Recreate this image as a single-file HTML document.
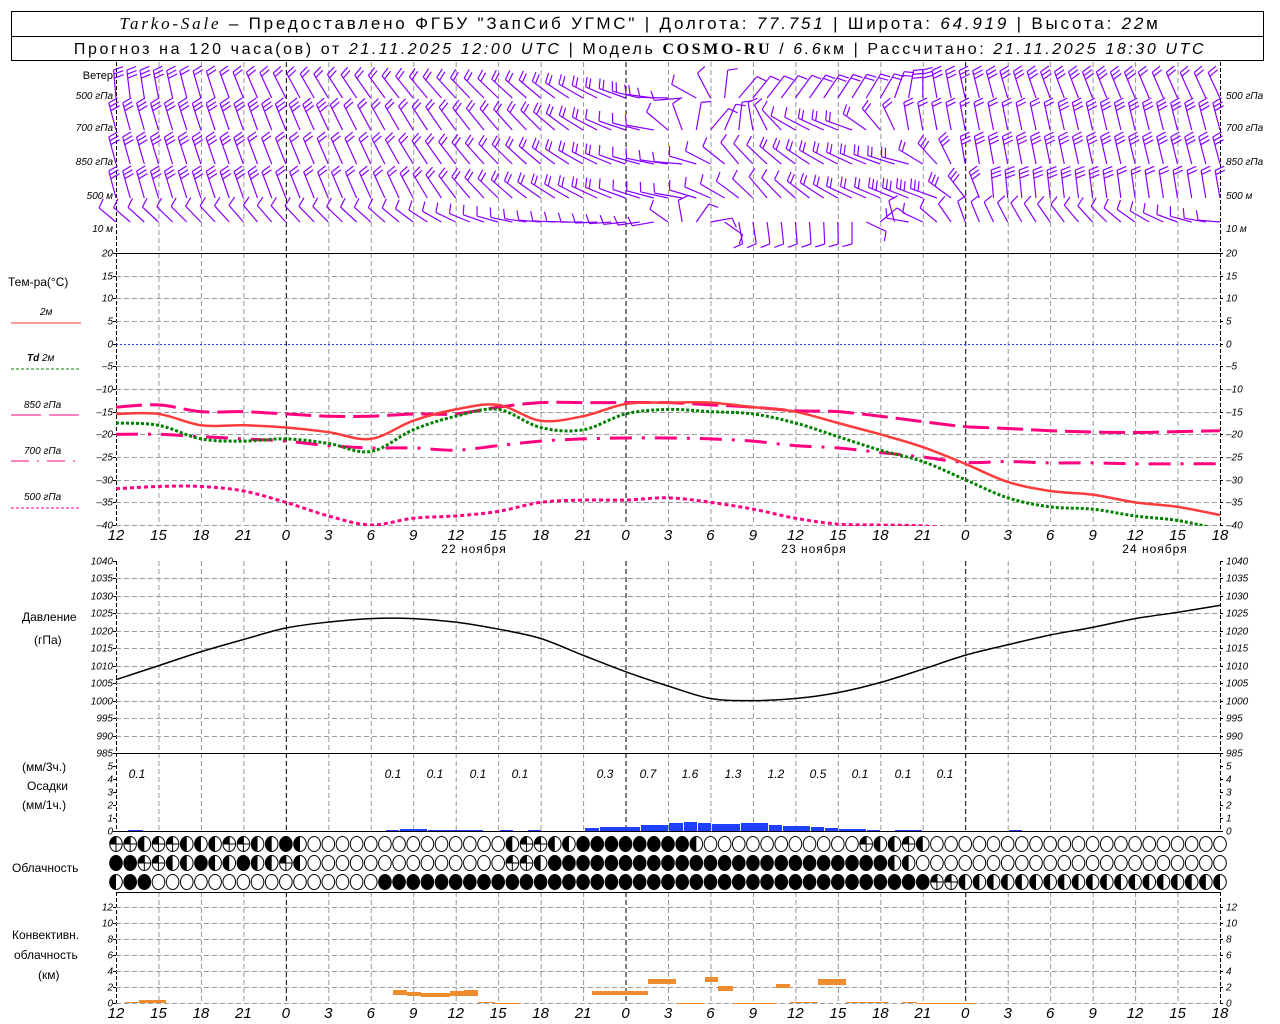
<!DOCTYPE html>
<html><head><meta charset="utf-8"><style>
html,body{margin:0;padding:0;background:#fff;width:1280px;height:1024px;overflow:hidden}
svg{display:block}
text{font-family:"Liberation Sans",sans-serif;fill:#000}
.t{font-size:10px;font-style:italic}
.b{font-size:15px;font-style:italic}
.l{font-size:12px}
</style></head><body>
<svg id="s" width="1280" height="1024" viewBox="0 0 1280 1024" xmlns="http://www.w3.org/2000/svg">
<defs><clipPath id="ct"><rect x="116" y="253" width="1104" height="273"/></clipPath></defs>
<rect x="11.5" y="11.5" width="1252" height="49" fill="none" stroke="#000"/>
<line x1="11" y1="36.5" x2="1264" y2="36.5" stroke="#000"/>
<text x="640" y="29" text-anchor="middle" style="font-size:17px;letter-spacing:2.8px"><tspan style="font-family:'Liberation Serif',serif;font-style:italic">Tarko-Sale</tspan> – Предоставлено ФГБУ "ЗапСиб УГМС" | Долгота: <tspan font-style="italic">77.751</tspan> | Широта: <tspan font-style="italic">64.919</tspan> | Высота: <tspan font-style="italic">22</tspan>м</text>
<text x="640" y="54" text-anchor="middle" style="font-size:16px;letter-spacing:2.6px">Прогноз на 120 часа(ов) от <tspan font-style="italic">21.11.2025 12:00 UTC</tspan>  | Модель <tspan style="font-family:'Liberation Serif',serif;font-weight:bold">COSMO-RU</tspan> / <tspan font-style="italic">6.6</tspan>км | Рассчитано: <tspan font-style="italic">21.11.2025 18:30 UTC</tspan></text>
<g id="g"></g>
<text x="113" y="79" text-anchor="end" class="l" style="font-size:11px">Ветер</text>
<text x="8" y="286" class="l">Тем-ра(°C)</text>
<text x="40" y="315" class="t">2м</text><line x1="11" y1="323" x2="81" y2="323" stroke="#ff3030" stroke-width="1"/>
<text x="27" y="361" class="t"><tspan font-weight="bold">Td</tspan>  2м</text><line x1="11" y1="369" x2="81" y2="369" stroke="#008000" stroke-dasharray="3,2"/>
<text x="24" y="408" class="t">850 гПа</text><line x1="11" y1="415" x2="81" y2="415" stroke="#ff0080" stroke-dasharray="30,8"/>
<text x="24" y="454" class="t">700 гПа</text><line x1="11" y1="461" x2="81" y2="461" stroke="#ff0080" stroke-dasharray="18,8,2,8"/>
<text x="24" y="500" class="t">500 гПа</text><line x1="11" y1="508" x2="81" y2="508" stroke="#ff0080" stroke-dasharray="3,2"/>
<text x="474" y="553" text-anchor="middle" class="l" style="letter-spacing:1px">22 ноября</text>
<text x="814" y="553" text-anchor="middle" class="l" style="letter-spacing:1px">23 ноября</text>
<text x="1155" y="553" text-anchor="middle" class="l" style="letter-spacing:1px">24 ноября</text>
<text x="22" y="621" class="l">Давление</text><text x="34" y="644" class="l">(гПа)</text>
<text x="22" y="771" class="l">(мм/3ч.)</text><text x="27" y="790" class="l">Осадки</text><text x="22" y="809" class="l">(мм/1ч.)</text>
<text x="12" y="872" class="l">Облачность</text>
<text x="12" y="939" class="l">Конвективн.</text><text x="14" y="959" class="l">облачность</text><text x="38" y="979" class="l">(км)</text>
</svg>
<script>
var NS="http://www.w3.org/2000/svg",G=document.getElementById("g");
function el(t,a,txt){var e=document.createElementNS(NS,t);for(var k in a)e.setAttribute(k,a[k]);if(txt!=null)e.textContent=txt;G.appendChild(e);return e;}
var L=116,R=1220,S=1104/26;
function X3(k){return L+k*S;}function XH(h){return L+h*S/3;}
function lab(k){return ["12","15","18","21","0","3","6","9","12","15","18","21","0","3","6","9","12","15","18","21","0","3","6","9","12","15","18"][k];}
var segs=[[62,253],[253,525],[561,753],[753,831],[892,1003]];
for(var k=1;k<26;k++){var x=X3(k)+.5,mid=(k==4||k==12||k==20);
 segs.forEach(function(s){el("line",{x1:x,y1:s[0],x2:x,y2:s[1],stroke:mid?"#000":"#999","stroke-dasharray":"5,3","stroke-width":1});});}
function axis(y0,y1){[L+.5,R+.5].forEach(function(x){el("line",{x1:x,y1:y0,x2:x,y2:y1,stroke:"#000","stroke-dasharray":"4,2"});});}
axis(62,253);axis(253,526);axis(561,754);axis(753,831);axis(892,1003);
function hgrid(y,solid){el("line",{x1:L,y1:y+.5,x2:R,y2:y+.5,stroke:solid?"#000":"#999","stroke-dasharray":solid?"":"5,3","stroke-width":1});}
function ticks(y,t){el("text",{x:113,y:y+3.5,"text-anchor":"end",class:"t"},t);el("text",{x:1226,y:y+3.5,class:"t"},t);
 el("line",{x1:L-3,y1:y+.5,x2:L,y2:y+.5,stroke:"#000"});el("line",{x1:R,y1:y+.5,x2:R+3,y2:y+.5,stroke:"#000"});}
function TY(t){return 343.67-t*4.5333;}
for(var t=-40;t<=20;t+=5){var y=Math.round(TY(t));if(t==20)hgrid(y,1);else if(t==0)el("line",{x1:L,y1:y+.5,x2:R,y2:y+.5,stroke:"#2040ff","stroke-dasharray":"2,2"});else hgrid(y,0);ticks(y,String(t).replace("-","–"));}
function PY(p){return 561+(1040-p)*3.4909;}
for(var p=985;p<=1040;p+=5){var y=Math.round(PY(p));if(p==985)hgrid(y,1);else if(p!=1040)hgrid(y,0);ticks(y,p);}
for(var m=0;m<=5;m++){var y=Math.round(831-m*13);if(m==0)hgrid(y,1);ticks(y,m);}
hgrid(892,1);
for(var c=0;c<=12;c+=2){var y=Math.round(1003-c*8);hgrid(y,0);ticks(y,c);}
[535,1013].forEach(function(yy){for(var k=0;k<=26;k++)el("text",{x:X3(k),y:yy+5,"text-anchor":"middle",class:"b"},lab(k));});
function path(pts){var d="M"+pts[0][0]+","+pts[0][1];for(var i=0;i<pts.length-1;i++){var p0=pts[i-1]||pts[i],p1=pts[i],p2=pts[i+1],p3=pts[i+2]||p2;
 d+=" C"+(p1[0]+(p2[0]-p0[0])/6)+","+(p1[1]+(p2[1]-p0[1])/6)+" "+(p2[0]-(p3[0]-p1[0])/6)+","+(p2[1]-(p3[1]-p1[1])/6)+" "+p2[0]+","+p2[1];}return d;}
function curve(v,f,st){var pts=v.map(function(a,i){return[X3(i),f(a)];});var a={d:path(pts),fill:"none"};for(var k in st)a[k]=st[k];return el("path",a);}
var T2=[-15.5,-15.5,-18,-18,-18.5,-19.5,-21,-17,-14.5,-13.5,-17,-16,-13.3,-13,-13,-14,-15,-17.5,-20,-22.8,-26.5,-30.5,-32.5,-33.3,-35,-36,-37.8];
var TD=[-17.5,-18,-21,-21.5,-21,-22,-23.8,-19,-16,-14.5,-18.5,-19,-15.5,-14.5,-15,-15.5,-17.5,-20.5,-23.5,-26,-30,-34,-36,-36.5,-38,-39,-41];
var T85=[-14,-13.5,-15,-15,-15.5,-16,-16,-15.5,-15.5,-14,-13,-13,-13,-13,-13.5,-14,-14.8,-15,-16,-17.2,-18.3,-18.7,-19.2,-19.5,-19.6,-19.4,-19.2];
var T70=[-20,-20,-20.5,-21,-21.5,-22.5,-23,-23,-23.5,-22.5,-21.5,-21,-20.8,-20.8,-21,-21.5,-22.5,-23,-24,-25,-26.2,-26,-26.3,-26.3,-26.5,-26.5,-26.5];
var T50=[-32,-31.5,-31.5,-32.5,-35,-38,-40,-38.5,-38,-37,-35,-34.5,-34.5,-34,-35,-36.5,-38.5,-39.8,-40,-40.2,-41,-42,-43,-43,-43,-43,-43];
var gc=el("g",{"clip-path":"url(#ct)"});
function cv(v,st){var p=curve(v,TY,st);gc.appendChild(p);}
cv(T50,{stroke:"#ff0080","stroke-width":3,"stroke-dasharray":"4,3"});
cv(T70,{stroke:"#ff0080","stroke-width":3,"stroke-dasharray":"22,10,3,10"});
cv(T85,{stroke:"#ff0080","stroke-width":3,"stroke-dasharray":"26,8"});
cv(TD,{stroke:"#008000","stroke-width":3,"stroke-dasharray":"3,2"});
cv(T2,{stroke:"#ff3c3c","stroke-width":2.5});
var PR=[1006,1010,1014,1017.5,1020.8,1022.5,1023.5,1023.5,1022.5,1020.5,1017.8,1013,1008.3,1004.2,1000.6,1000,1000.6,1002.3,1005.2,1009,1013,1016,1018.8,1021,1023.5,1025.3,1027.3];
curve(PR,PY,{stroke:"#000","stroke-width":1.5});
[[137,"0.1"],[393,"0.1"],[435,"0.1"],[478,"0.1"],[520,"0.1"],[605,"0.3"],[648,"0.7"],[690,"1.6"],[733,"1.3"],[776,"1.2"],[818,"0.5"],[860,"0.1"],[903,"0.1"],[945,"0.1"]].forEach(function(a){el("text",{x:a[0],y:778,"text-anchor":"middle",class:"t",style:"font-size:12px"},a[1]);});
var bars=[[128,144,1],[386,400,1],[400,428,2],[428,484,1],[500,514,1],[528,542,1],[585,600,3],[600,641,4],[641,669,6],[669,684,8],[684,698,9],[698,712,8],[712,741,7],[741,769,8],[769,783,6],[783,811,5],[811,825,4],[825,839,3],[839,867,2],[867,881,1],[895,923,1],[1009,1023,1]];
bars.forEach(function(b){el("rect",{x:b[0],y:831-b[2],width:b[1]-b[0]-1,height:b[2],fill:"#2040ff"});});
var rows=[
"qqhqqhhhqqhhFh"+"EEEEEEEEEEEEEE"+"hqqhh"+"FFFFFFFF"+"h"+"EEEEEEEEEEE"+"qhhqh"+"EEEEEEEEEEEEEEEEEEEEEEE",
"FFqqhhFhhFhhqh"+"EEEEEEEEEEEEEE"+"qqh"+"FFFFFFFFFFFFFFFFFFFFFFFF"+"hh"+"EEEEEEEEEEEEEEEEEEEEEEE",
"hFF"+"EEEEEEEEEEEEEEEE"+"FFFFFFFFFFFFFFFFFFFFFFFFFFFFFFFFFFFFFFF"+"qq"+"hhhhhhhhhhhhhhhhhhh"];
var ry=[844,863,882];
rows.forEach(function(r,j){for(var i=0;i<79;i++){var ch=r[i]||"E",x=XH(i),y=ry[j];
 el("ellipse",{cx:x,cy:y,rx:6.3,ry:7.5,fill:ch=="F"?"#000":"#fff",stroke:"#000","stroke-width":1});
 if(ch=="h")el("path",{d:"M"+x+","+(y-7.5)+" A6.3,7.5 0 0,0 "+x+","+(y+7.5)+" Z",fill:"#000"});
 if(ch=="q"){el("path",{d:"M"+x+","+(y-7.5)+" A6.3,7.5 0 0,0 "+(x-6.3)+","+y+" L"+x+","+y+" Z",fill:"#000"});el("line",{x1:x,y1:y-7.5,x2:x,y2:y+7.5,stroke:"#000"});el("line",{x1:x-6,y1:y,x2:x+6,y2:y,stroke:"#000"});}
}});
[[125,139,1002,1],[139,166,1000,3],[393,407,990,5],[407,421,992,4],[421,450,993,4],[450,464,991,5],[464,478,990,6],[478,495,1002,1],[495,520,1003,1],[592,648,991,4],[648,676,979,5],[676,705,1003,1],[705,718,977,5],[718,733,986,5],[733,776,1003,1],[776,790,984,4],[790,818,1002,1],[818,846,979,6],[846,888,1002,1],[902,917,1002,1],[917,975,1003,1]].forEach(function(b){el("rect",{x:b[0],y:b[2],width:b[1]-b[0],height:b[3],fill:"#f08c30"});});
var wl=[["500 гПа",96],["700 гПа",128],["850 гПа",162],["500 м",196],["10   м",229]];
wl.forEach(function(w){el("text",{x:113,y:w[1]+3,"text-anchor":"end",class:"t"},w[0]);el("text",{x:1226,y:w[1]+3,class:"t"},w[0]);});
var keys=[
[[0,-5,3],[8,-20,2],[14,-30,2],[30,-50,2],[36,-70,2],[40,-95,1],[44,40,1],[54,30,2],[58,-10,3],[66,-20,3],[78,-25,2]],
[[0,-15,3],[10,-20,3],[20,-30,2],[30,-45,2],[38,-80,1],[42,40,1],[48,-60,1],[52,-70,2],[56,-10,2],[78,-15,3]],
[[0,-15,3],[18,-25,2],[30,-50,2],[40,-85,1],[44,-40,1],[50,-60,2],[56,-75,2],[60,-10,3],[78,-15,3]],
[[0,-15,3],[20,-25,2],[30,-55,2],[40,-80,1],[46,-40,1],[52,-65,2],[58,-70,3],[62,-5,3],[78,-10,2]],
[[0,-50,1],[10,-40,1],[20,-50,1],[30,-85,1],[38,-100,1],[44,170,1],[52,180,1],[56,-80,1],[60,-20,1],[70,-45,1],[78,-85,1]]];
var base=[98,130,164,198,222],lens=[28,28,28,28,22];
keys.forEach(function(K,r){for(var i=0;i<79;i++){var a=K[0],b=K[K.length-1];for(var q=0;q<K.length-1;q++)if(i>=K[q][0]&&i<=K[q+1][0]){a=K[q];b=K[q+1];break;}
 var f=b[0]==a[0]?0:(i-a[0])/(b[0]-a[0]),th=(a[1]+(b[1]-a[1])*f)*Math.PI/180,n=Math.round(a[2]+(b[2]-a[2])*f);
 var x=XH(i),y=base[r],Ls=lens[r],dx=Math.sin(th),dy=-Math.cos(th),tx=x+Ls*dx,ty=y+Ls*dy;
 var d="M"+x.toFixed(1)+","+y+" L"+tx.toFixed(1)+","+ty.toFixed(1),fa=th+75*Math.PI/180,fx=Math.sin(fa)*10,fy=-Math.cos(fa)*10;
 for(var m=0;m<n;m++){var px=tx-dx*m*4,py=ty-dy*m*4;d+=" M"+px.toFixed(1)+","+py.toFixed(1)+" l"+fx.toFixed(1)+","+fy.toFixed(1);}
 el("path",{d:d,stroke:"#8a00ff","stroke-width":1.2,fill:"none"});}});
</script>
</body></html>
